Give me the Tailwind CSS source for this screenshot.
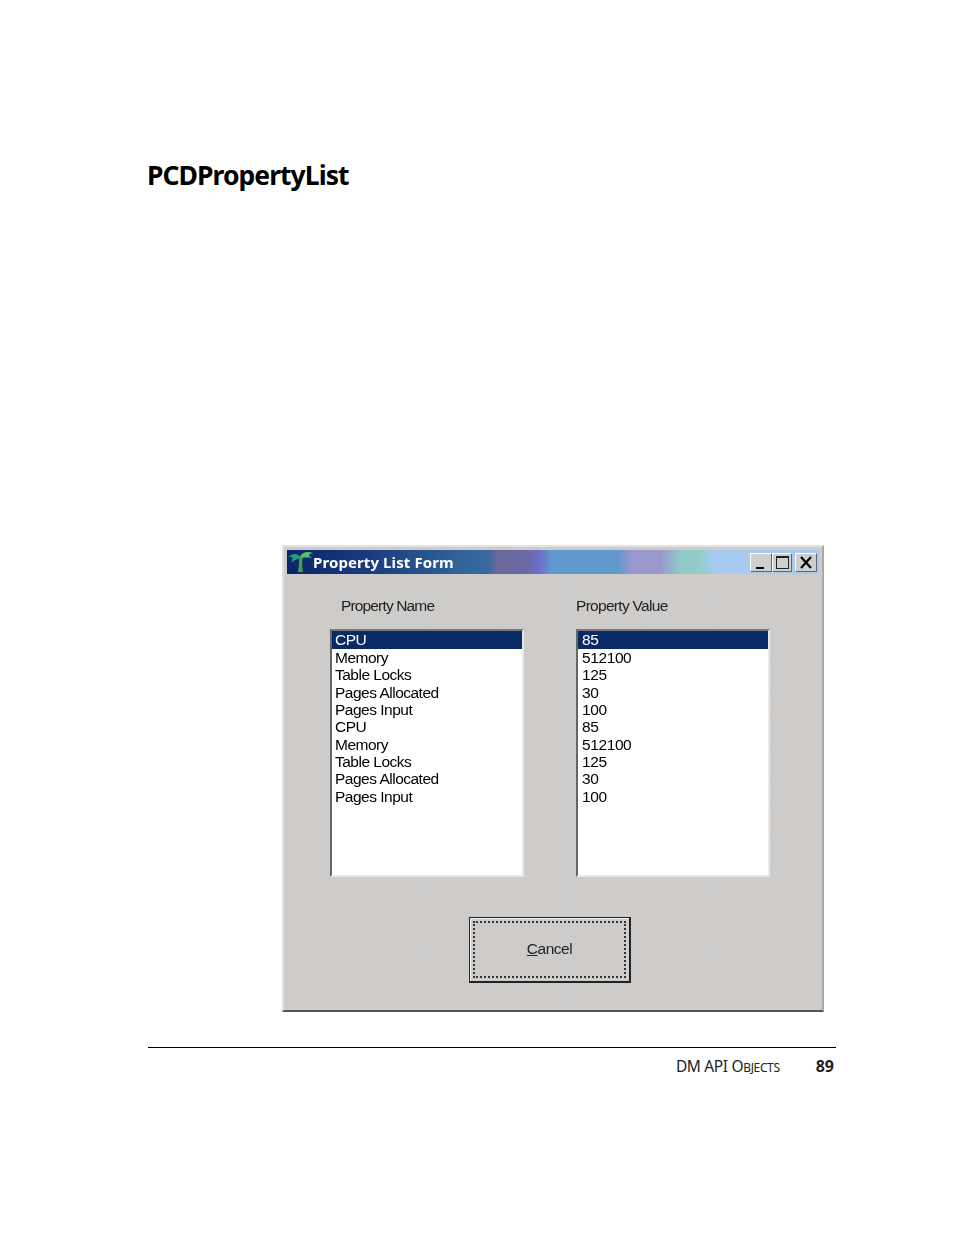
<!DOCTYPE html>
<html lang="en">
<head>
    <meta charset="UTF-8">
    <title>PCDPropertyList</title>
    <script src="https://cdn.jsdelivr.net/npm/@tailwindcss/browser@4"></script>
</head>
<body class="bg-white">
<div class="w-[954px] h-[1235px] pl-[148px] pt-[157px] font-['Liberation_Sans',sans-serif] overflow-hidden">

    <h1 class="h-[388px] text-[26.5px] leading-[37px] font-bold text-black tracking-[-0.95px] font-['Noto_Sans',sans-serif] -ml-px">PCDPropertyList</h1>

    <!-- dialog -->
    <div class="ml-[134px] w-[542px] h-[467px] bg-[#cdcccb] bg-[radial-gradient(circle,#e4d2c2_0.7px,transparent_1px),radial-gradient(circle,#e4d2c2_0.7px,transparent_1px)] bg-[length:9px_7px,13px_11px] bg-[position:0_0,4px_3px] border-t-2 border-l-2 border-t-[#e2e2e2] border-l-[#e2e2e2] border-r-2 border-b-2 border-r-[#a8a8a8] border-b-[#555] pl-[3px] pt-[3px] pr-[3px] blur-[0.7px]">
        <div class="h-[24px] flex items-center justify-between bg-[linear-gradient(90deg,#0a246a_0px,#1c3f80_90px,#34689c_185px,#36689e_200px,#6a689c_210px,#6a6aa4_240px,#6e6ccc_252px,#5f98cc_264px,#6098cc_330px,#9a98cc_345px,#9a98cc_372px,#90ccc8_395px,#90ccc8_412px,#a6caf0_428px)] pl-[1px] pr-[2px]">
            <div class="flex items-center">
                <svg width="25" height="22" viewBox="0 0 25 22">
                    <path d="M10 21 C11 15 11 10 11 6 L15 6 C14 10 14 15 15 21 Z" fill="#4c9a50"/>
                    <path d="M13 7 C10 2 5 2 0 6 C4 5 6 6 3 12 C7 8 10 8 13 7 Z" fill="#1fa27a"/>
                    <path d="M12 6 C14 1 19 0 25 2 C21 3 19 4 24 7 C19 6 15 7 12 6 Z" fill="#58c468"/>
                </svg>
                <span class="text-[15px] font-bold text-white font-['Noto_Sans',sans-serif] tracking-[0.1px]">Property List Form</span>
            </div>
            <div class="flex items-center">
                <button class="w-[22px] h-[19px] bg-[#cfcfcf] border border-t-white border-l-white border-r-[#666] border-b-[#666] flex items-end justify-center pb-[2px]"><span class="w-[8px] h-[2px] bg-black -ml-[3px]"></span></button>
                <button class="w-[20px] h-[19px] bg-[#cfcfcf] border border-t-white border-l-white border-r-[#666] border-b-[#666] flex items-center justify-center"><span class="w-[13px] h-[13px] border border-t-2 border-[#222]"></span></button>
                <button class="ml-[3px] w-[22px] h-[19px] bg-[#cfcfcf] border border-t-white border-l-white border-r-[#666] border-b-[#666] flex items-center justify-center">
                    <svg width="14" height="13" viewBox="0 0 14 13"><path d="M2 1 L12 12 M12 1 L2 12" stroke="#000" stroke-width="2.2" fill="none"/></svg>
                </button>
            </div>
        </div>

        <div class="grid grid-cols-[194px_194px] gap-x-[52px] pl-[43px] pt-[20px] text-[15.5px] text-[#222]">
            <div class="pl-[11px] h-[35px] tracking-[-0.85px]">Property Name</div>
            <div class="h-[35px] tracking-[-0.7px]">Property Value</div>

            <div class="h-[248px] bg-white border-t-2 border-l-2 border-t-[#777] border-l-[#666] border-r-2 border-b-2 border-r-[#e8e8e8] border-b-[#e8e8e8] leading-[17.35px] text-black tracking-[-0.5px]">
                <div class="bg-[#0a2a66] text-white h-[18px] pl-[3px]">CPU</div>
                <div class="pl-[3px]">Memory</div>
                <div class="pl-[3px]">Table Locks</div>
                <div class="pl-[3px]">Pages Allocated</div>
                <div class="pl-[3px]">Pages Input</div>
                <div class="pl-[3px]">CPU</div>
                <div class="pl-[3px]">Memory</div>
                <div class="pl-[3px]">Table Locks</div>
                <div class="pl-[3px]">Pages Allocated</div>
                <div class="pl-[3px]">Pages Input</div>
            </div>
            <div class="h-[248px] bg-white border-t-2 border-l-2 border-t-[#777] border-l-[#666] border-r-2 border-b-2 border-r-[#e8e8e8] border-b-[#e8e8e8] leading-[17.35px] text-black tracking-[-0.4px]">
                <div class="bg-[#0a2a66] text-white h-[18px] pl-[4px]">85</div>
                <div class="pl-[4px]">512100</div>
                <div class="pl-[4px]">125</div>
                <div class="pl-[4px]">30</div>
                <div class="pl-[4px]">100</div>
                <div class="pl-[4px]">85</div>
                <div class="pl-[4px]">512100</div>
                <div class="pl-[4px]">125</div>
                <div class="pl-[4px]">30</div>
                <div class="pl-[4px]">100</div>
            </div>
        </div>

        <div class="ml-[182px] mt-[40px] w-[162px] h-[66px] border border-[#222] border-r-2 border-b-2 p-[3px] shadow-[inset_1px_1px_0_#f4f4f4]">
            <div class="w-full h-full border-2 border-dotted border-[#333] flex items-center justify-center text-[15.5px] text-[#222] tracking-[-0.5px] pb-[2px]">
                <span><span class="underline">C</span>ancel</span>
            </div>
        </div>
    </div>

    <!-- footer -->
    <div class="mt-[35px] w-[688px] border-t border-black pt-[6px] flex justify-end items-baseline text-[15.5px] text-[#222] font-['Noto_Sans',sans-serif] pr-[2px]">
        <span class="tracking-[-0.35px]">DM API O<span class="text-[12px]">BJECTS</span></span>
        <span class="ml-[36px] font-bold text-[16px]">89</span>
    </div>
</div>
</body>
</html>
